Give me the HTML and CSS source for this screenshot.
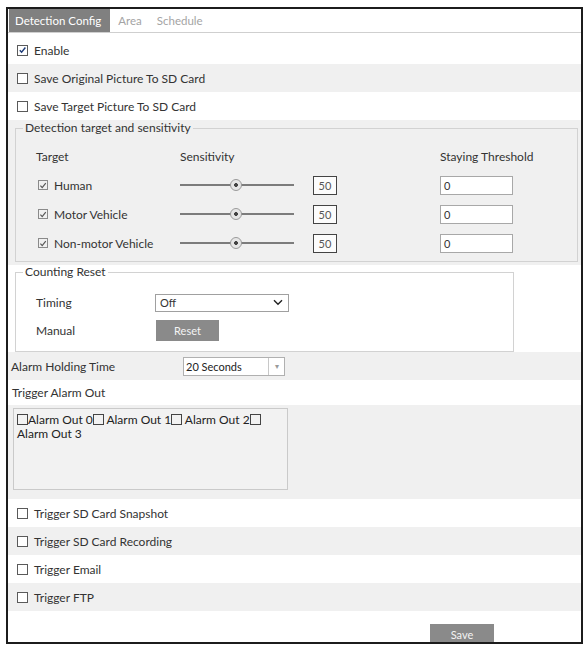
FILE: index.html
```html
<!DOCTYPE html>
<html>
<head>
<meta charset="utf-8">
<link rel="stylesheet" href="styles.css">
</head>
<body>
<div class="frame">
  <div class="tabs">
    <span class="tab active">Detection Config</span>
    <span class="tab">Area</span>
    <span class="tab">Schedule</span>
  </div>

  <div class="row first">
    <span class="cb checked"><svg width="10" height="10" viewBox="0 0 10 10"><path d="M2 5.2 L4 7.4 L8.2 2.2" fill="none" stroke="#1d3b78" stroke-width="1.6"/></svg></span>
    <span class="lbl">Enable</span>
  </div>
  <div class="row alt"><span class="cb"></span><span class="lbl">Save Original Picture To SD Card</span></div>
  <div class="row"><span class="cb"></span><span class="lbl">Save Target Picture To SD Card</span></div>

  <div class="block alt det-block">
    <fieldset class="fs det">
      <legend>Detection target and sensitivity</legend>
      <div class="det-grid">
        <span class="hdr">Target</span>
        <span class="hdr">Sensitivity</span>
        <span></span>
        <span class="hdr">Staying Threshold</span>

        <span class="target"><span class="cb small"><svg width="9" height="9" viewBox="0 0 9 9"><path d="M1.6 4.6 L3.6 6.8 L7.6 1.8" fill="none" stroke="#555" stroke-width="1.3"/></svg></span>Human</span>
        <span class="slider"><span class="track"></span><span class="thumb"></span></span>
        <span class="val">50</span>
        <span class="inp">0</span>

        <span class="target"><span class="cb small"><svg width="9" height="9" viewBox="0 0 9 9"><path d="M1.6 4.6 L3.6 6.8 L7.6 1.8" fill="none" stroke="#555" stroke-width="1.3"/></svg></span>Motor Vehicle</span>
        <span class="slider"><span class="track"></span><span class="thumb"></span></span>
        <span class="val">50</span>
        <span class="inp">0</span>

        <span class="target"><span class="cb small"><svg width="9" height="9" viewBox="0 0 9 9"><path d="M1.6 4.6 L3.6 6.8 L7.6 1.8" fill="none" stroke="#555" stroke-width="1.3"/></svg></span>Non-motor Vehicle</span>
        <span class="slider"><span class="track"></span><span class="thumb"></span></span>
        <span class="val">50</span>
        <span class="inp">0</span>
      </div>
    </fieldset>
  </div>

  <div class="block cnt-block">
    <fieldset class="fs cnt">
      <legend>Counting Reset</legend>
      <div class="cnt-grid">
        <span class="clbl">Timing</span>
        <span class="sel">Off<svg class="chev" width="10" height="7" viewBox="0 0 10 7"><path d="M1 1.2 L5 5.2 L9 1.2" fill="none" stroke="#222" stroke-width="1.4"/></svg></span>
        <span class="clbl">Manual</span>
        <span class="btn reset">Reset</span>
      </div>
    </fieldset>
  </div>

  <div class="row alt holding">
    <span class="hlbl">Alarm Holding Time</span>
    <span class="sel2"><span class="sel2-text">20 Seconds</span><span class="sel2-btn">&#9662;</span></span>
  </div>

  <div class="row tao"><span>Trigger Alarm Out</span></div>
  <div class="block alt alarm-block">
    <div class="alarm-box">
      <span class="cb in"></span>Alarm Out 0<span class="cb in"></span> Alarm Out 1<span class="cb in"></span> Alarm Out 2<span class="cb in"></span><span class="nw">Alarm Out 3</span>
    </div>
  </div>

  <div class="row"><span class="cb"></span><span class="lbl">Trigger SD Card Snapshot</span></div>
  <div class="row alt"><span class="cb"></span><span class="lbl">Trigger SD Card Recording</span></div>
  <div class="row"><span class="cb"></span><span class="lbl">Trigger Email</span></div>
  <div class="row alt"><span class="cb"></span><span class="lbl">Trigger FTP</span></div>

  <div class="save-row"><span class="btn save">Save</span></div>
</div>
</body>
</html>
```

FILE: styles.css
```css
html, body {
  margin: 0;
  padding: 0;
  background: #ffffff;
}
body {
  font-family: Lato, "Liberation Sans", sans-serif;
  font-size: 12px;
  color: #333333;
}
.frame {
  margin: 7px 0 0 6px;
  width: 573px;
  height: 633px;
  border: 2px solid #1c1c1c;
  overflow: hidden;
  background: #ffffff;
}
.tabs {
  display: flex;
  height: 23px;
  align-items: stretch;
  border-bottom: 1px solid #cfcfcf;
  margin-bottom: 3px;
  font-size: 11.5px;
}
.tab {
  display: flex;
  align-items: center;
  padding: 0 7px 0 8px;
  color: #a4a4a4;
}
.tab.active {
  background: #808080;
  color: #ffffff;
  padding: 0 9px 0 6px;
  margin-right: 0;
  margin-left: 1px;
}
.tab:last-child {
  padding-left: 8px;
}
.row {
  display: flex;
  align-items: center;
  height: 28px;
  padding-left: 9px;
}
.alt {
  background: #f0f0f0;
}
.cb {
  display: inline-flex;
  align-items: center;
  justify-content: center;
  width: 9px;
  height: 9px;
  border: 1px solid #5a5a5a;
  background: #ffffff;
  box-sizing: content-box;
  flex: none;
}
.cb.small {
  width: 8px;
  height: 8px;
  border-color: #8a8a8a;
  margin-right: 6px;
  background: transparent;
}
.lbl {
  margin-left: 6px;
}
.block {
  padding: 0 3px 0 7px;
}
.det-block {
  height: 145px;
  box-sizing: border-box;
}
.fs {
  margin: 0;
  border: 1px solid #d2d2d2;
  padding: 0 0 0 7px;
  min-width: 0;
}
.fs legend {
  padding: 0 2px;
  line-height: 16px;
}
.det {
  padding-bottom: 8px;
}
.det-grid {
  margin: 12px 0 0 13px;
  display: grid;
  grid-template-columns: 144px 133px 127px 1fr;
  grid-template-rows: 18px 20px 20px 20px;
  row-gap: 9px;
  align-items: center;
}
.hdr {
  line-height: 18px;
}
.target {
  display: flex;
  align-items: center;
  padding-left: 2px;
}
.slider {
  position: relative;
  width: 114px;
  height: 14px;
  display: flex;
  align-items: center;
}
.track {
  display: block;
  width: 114px;
  height: 2px;
  background: #7c7c7c;
}
.thumb {
  position: absolute;
  left: 50px;
  top: 1px;
  width: 10px;
  height: 10px;
  border-radius: 50%;
  border: 1px solid #9a9a9a;
  background: radial-gradient(circle, #444 0 1.6px, #e6e6e6 2.2px);
}
.val {
  width: 22px;
  height: 17px;
  border: 1px solid #444;
  background: #fcfcfc;
  display: flex;
  align-items: center;
  justify-content: center;
  font-size: 11px;
  color: #555;
}
.inp {
  width: 68px;
  height: 17px;
  border: 1px solid #a8a8a8;
  background: #ffffff;
  display: flex;
  align-items: center;
  padding-left: 3px;
  font-size: 11px;
}
.cnt-block {
  height: 87px;
  padding-top: 1px;
  box-sizing: border-box;
}
.cnt {
  width: 499px;
  height: 86px;
  box-sizing: border-box;
}
.cnt legend {
  line-height: 12px;
}
.cnt-grid {
  margin: 14px 0 0 13px;
  display: grid;
  grid-template-columns: 119px auto;
  grid-template-rows: 21px 21px;
  row-gap: 7px;
  align-items: center;
  justify-items: start;
}
.sel {
  width: 123px;
  height: 16px;
  border: 1px solid #a0a0a0;
  background: #ffffff;
  display: flex;
  align-items: center;
  justify-content: space-between;
  padding: 0 5px 0 4px;
  font-size: 11px;
}
.btn {
  display: flex;
  align-items: center;
  justify-content: center;
  background: #8a8a8a;
  color: #f4f4f4;
  font-size: 11px;
}
.reset {
  width: 63px;
  height: 21px;
  margin-left: 1px;
}
.holding {
  padding-left: 3px;
}
.hlbl {
  width: 172px;
}
.sel2 {
  display: flex;
  width: 100px;
  height: 17px;
  border: 1px solid #b0b0b0;
  background: #ffffff;
  font-size: 11px;
}
.sel2-text {
  flex: 1;
  display: flex;
  align-items: center;
  padding-left: 2px;
  color: #222;
}
.sel2-btn {
  width: 15px;
  border-left: 1px solid #c8c8c8;
  display: flex;
  align-items: center;
  justify-content: center;
  color: #9a9a9a;
  font-size: 8px;
}
.tao {
  height: 25px;
  padding-left: 4px;
}
.alarm-block {
  height: 94px;
  padding: 3px 0 0 5px;
  box-sizing: border-box;
}
.alarm-box {
  width: 267px;
  height: 76px;
  border: 1px solid #cacaca;
  background: #f2f2f2;
  padding: 4px 3px 0 3px;
  line-height: 14px;
  color: #222;
}
.cb.in {
  display: inline-block;
  width: 9px;
  height: 9px;
  vertical-align: -1px;
  background: transparent;
  border-color: #444;
}
.nw {
  white-space: nowrap;
}
.save-row {
  display: flex;
  padding: 13px 0 0 422px;
}
.save {
  width: 64px;
  height: 20px;
}
```
